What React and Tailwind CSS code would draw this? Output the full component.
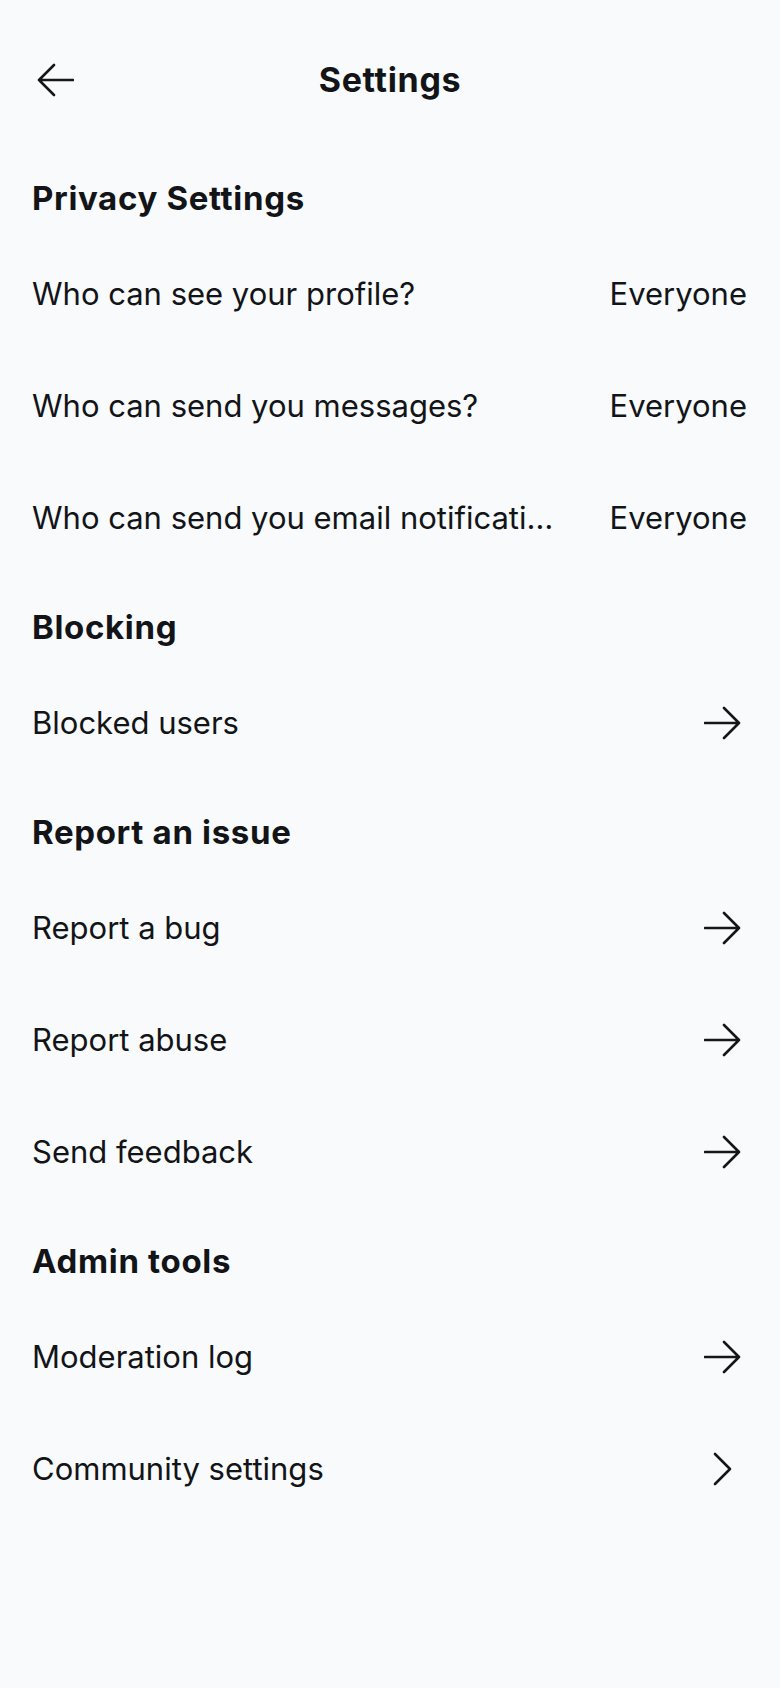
import React from "react";

const font = { fontFamily: "Inter, 'Noto Sans', sans-serif" };

function ArrowRight() {
  return (
    <svg width="38" height="34" viewBox="0 0 38 34" fill="none" className="mr-[5px] shrink-0">
      <path d="M1 17H35M20 2L35 17L20 32" stroke="#14171a" strokeWidth="2.6" strokeLinecap="round" strokeLinejoin="round" />
    </svg>
  );
}

function Chevron() {
  return (
    <svg width="20" height="34" viewBox="0 0 20 34" fill="none" className="mr-[14px] shrink-0">
      <path d="M2 2L17 17L2 32" stroke="#14171a" strokeWidth="2.6" strokeLinecap="round" strokeLinejoin="round" />
    </svg>
  );
}

function Header({ children }) {
  return (
    <div className="pt-[35px] pb-[22px] px-[32px]">
      <h2 className="text-[33px] leading-[36px] font-bold tracking-[0.02em] text-[#121417]">{children}</h2>
    </div>
  );
}

function Row({ label, value, icon }) {
  return (
    <div className="h-[112px] flex items-center justify-between pl-[32px] pr-[33px] gap-[52px]">
      <span className="truncate text-[31px] leading-[36px] text-[#121417] min-w-0">{label}</span>
      {value && <span className="shrink-0 text-[31px] leading-[36px] text-[#121417]">{value}</span>}
      {icon === "arrow" && <ArrowRight />}
      {icon === "chevron" && <Chevron />}
    </div>
  );
}

export default function App() {
  return (
    <div className="min-h-[1688px] w-full bg-[#f8fafc]" style={font}>
      <div className="h-[145px] pt-[63px] px-[36px] flex items-start justify-between">
        <svg width="38" height="34" viewBox="0 0 38 34" fill="none" className="shrink-0">
          <path d="M37 17H3M18 2L3 17L18 32" stroke="#14171a" strokeWidth="2.6" strokeLinecap="round" strokeLinejoin="round" />
        </svg>
        <h1 className="text-[34px] leading-[34px] font-bold tracking-[0.02em] text-[#121417]">Settings</h1>
        <div className="w-[38px] h-[34px] shrink-0" />
      </div>

      <Header>Privacy Settings</Header>
      <Row label="Who can see your profile?" value="Everyone" />
      <Row label="Who can send you messages?" value="Everyone" />
      <Row label="Who can send you email notifications?" value="Everyone" />

      <Header>Blocking</Header>
      <Row label="Blocked users" icon="arrow" />

      <Header>Report an issue</Header>
      <Row label="Report a bug" icon="arrow" />
      <Row label="Report abuse" icon="arrow" />
      <Row label="Send feedback" icon="arrow" />

      <Header>Admin tools</Header>
      <Row label="Moderation log" icon="arrow" />
      <Row label="Community settings" icon="chevron" />
    </div>
  );
}
